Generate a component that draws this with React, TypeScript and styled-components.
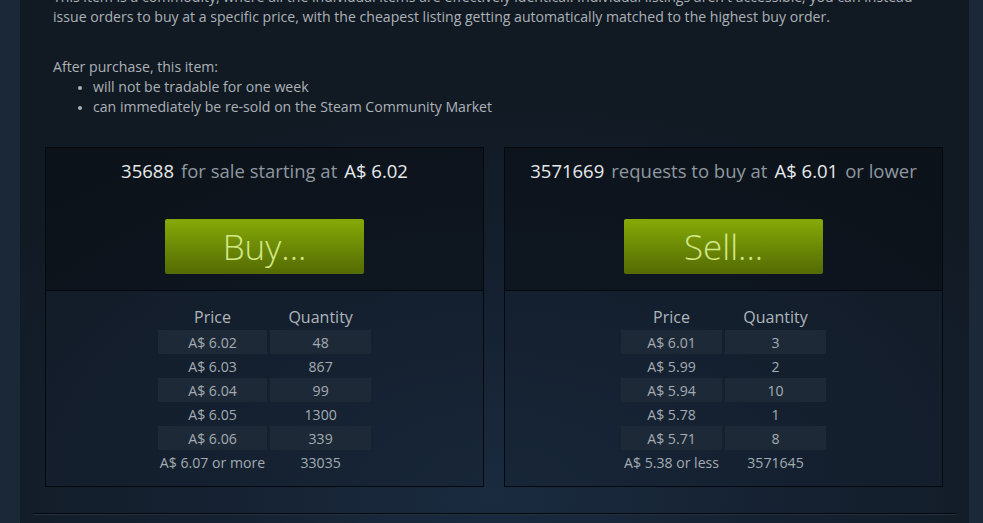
import React from "react";
import styled, { createGlobalStyle } from "styled-components";

const GlobalStyle = createGlobalStyle`
  html, body {
    margin: 0;
    padding: 0;
    background: #1b2838;
    overflow: hidden;
  }
  body {
    font-family: "Open Sans", "Liberation Sans", Arial, sans-serif;
  }
`;

const Page = styled.div`
  display: flex;
  padding-left: 20px;
  height: 523px;
  overflow: hidden;
`;

const Panel = styled.div`
  width: 949px;
  padding: 0 25px;
  box-sizing: border-box;
  background: radial-gradient(
      ellipse 70% 80% at 50% 95%,
      #1a2b3f 0%,
      #152131 45%,
      rgba(18, 26, 36, 0) 100%
    ),
    #111922;
`;

const Description = styled.div`
  margin-top: -13px;
  padding: 0 8px;
  font-size: 14.1px;
  line-height: 20px;
  color: #acb2b8;
  white-space: nowrap;
`;

const Para = styled.p`
  margin: 0 0 30px;
`;

const Bullets = styled.ul`
  margin: 0;
  padding-left: 40px;
  li::marker {
    font-size: 12px;
  }
`;

const Orders = styled.div`
  display: grid;
  grid-template-columns: 439px 439px;
  gap: 20px;
  margin-top: 30px;
`;

const OrderBox = styled.div`
  border: 1px solid #05080c;
  height: 338px;
  display: flex;
  flex-direction: column;
`;

const BoxHead = styled.div`
  height: 143px;
  box-sizing: border-box;
  padding-top: 11px;
  border-bottom: 1px solid #05080c;
  background: rgba(6, 10, 15, 0.45);
  display: flex;
  flex-direction: column;
  align-items: center;
`;

const Summary = styled.div`
  font-size: 18.5px;
  line-height: 24px;
  color: #8f98a0;
  display: flex;
  gap: 7px;
`;

const Strong = styled.span`
  color: #e8eaec;
`;

const GreenButton = styled.button`
  margin-top: 36px;
  width: 199px;
  height: 55px;
  border: 0;
  border-radius: 2px;
  padding: 0;
  cursor: pointer;
  background: linear-gradient(to bottom, #84a707 5%, #566d04 95%);
  color: #d2e885;
  font-family: "Open Sans", "Liberation Sans", sans-serif;
  font-weight: 300;
  font-size: 35px;
  line-height: 55px;
`;

const BoxBody = styled.div`
  flex: 1;
  padding-top: 13px;
  background: rgba(20, 32, 46, 0.35);
`;

const Table = styled.table`
  margin: 0 auto;
  border-collapse: separate;
  border-spacing: 3px 0;
  font-size: 14.1px;
  color: #a3abb2;
`;

const Th = styled.th`
  font-weight: normal;
  font-size: 16px;
  color: #aeb5bb;
  height: 26px;
  padding: 0 3px;
`;

const Td = styled.td<{ $striped: boolean }>`
  height: 24px;
  padding: 0 2px;
  min-width: 97px;
  text-align: center;
  background: ${(p) => (p.$striped ? "#1e2937" : "transparent")};
`;

const Separator = styled.div`
  margin: 26px -12px 0;
  height: 1px;
  background: #05080c;
  box-shadow: 0 1px 0 #24303d;
`;

type Row = [string, string];

const sellRows: Row[] = [
  ["A$ 6.02", "48"],
  ["A$ 6.03", "867"],
  ["A$ 6.04", "99"],
  ["A$ 6.05", "1300"],
  ["A$ 6.06", "339"],
  ["A$ 6.07 or more", "33035"],
];

const buyRows: Row[] = [
  ["A$ 6.01", "3"],
  ["A$ 5.99", "2"],
  ["A$ 5.94", "10"],
  ["A$ 5.78", "1"],
  ["A$ 5.71", "8"],
  ["A$ 5.38 or less", "3571645"],
];

const OrderTable: React.FC<{ rows: Row[] }> = ({ rows }) => (
  <Table>
    <thead>
      <tr>
        <Th>Price</Th>
        <Th>Quantity</Th>
      </tr>
    </thead>
    <tbody>
      {rows.map(([price, qty], i) => (
        <tr key={price}>
          <Td $striped={i % 2 === 0 && i < rows.length - 1}>{price}</Td>
          <Td $striped={i % 2 === 0 && i < rows.length - 1}>{qty}</Td>
        </tr>
      ))}
    </tbody>
  </Table>
);

export default function App() {
  return (
    <>
      <GlobalStyle />
      <Page>
        <Panel>
          <Description>
            <Para>
              This item is a commodity, where all the individual items are
              effectively identical. Individual listings aren't accessible; you
              can instead
              <br />
              issue orders to buy at a specific price, with the cheapest listing
              getting automatically matched to the highest buy order.
            </Para>
            After purchase, this item:
            <Bullets>
              <li>will not be tradable for one week</li>
              <li>can immediately be re-sold on the Steam Community Market</li>
            </Bullets>
          </Description>

          <Orders>
            <OrderBox>
              <BoxHead>
                <Summary>
                  <Strong>35688</Strong>
                  <span>for sale starting at</span>
                  <Strong>A$ 6.02</Strong>
                </Summary>
                <GreenButton>Buy...</GreenButton>
              </BoxHead>
              <BoxBody>
                <OrderTable rows={sellRows} />
              </BoxBody>
            </OrderBox>

            <OrderBox>
              <BoxHead>
                <Summary>
                  <Strong>3571669</Strong>
                  <span>requests to buy at</span>
                  <Strong>A$ 6.01</Strong>
                  <span>or lower</span>
                </Summary>
                <GreenButton>Sell...</GreenButton>
              </BoxHead>
              <BoxBody>
                <OrderTable rows={buyRows} />
              </BoxBody>
            </OrderBox>
          </Orders>

          <Separator />
        </Panel>
      </Page>
    </>
  );
}
